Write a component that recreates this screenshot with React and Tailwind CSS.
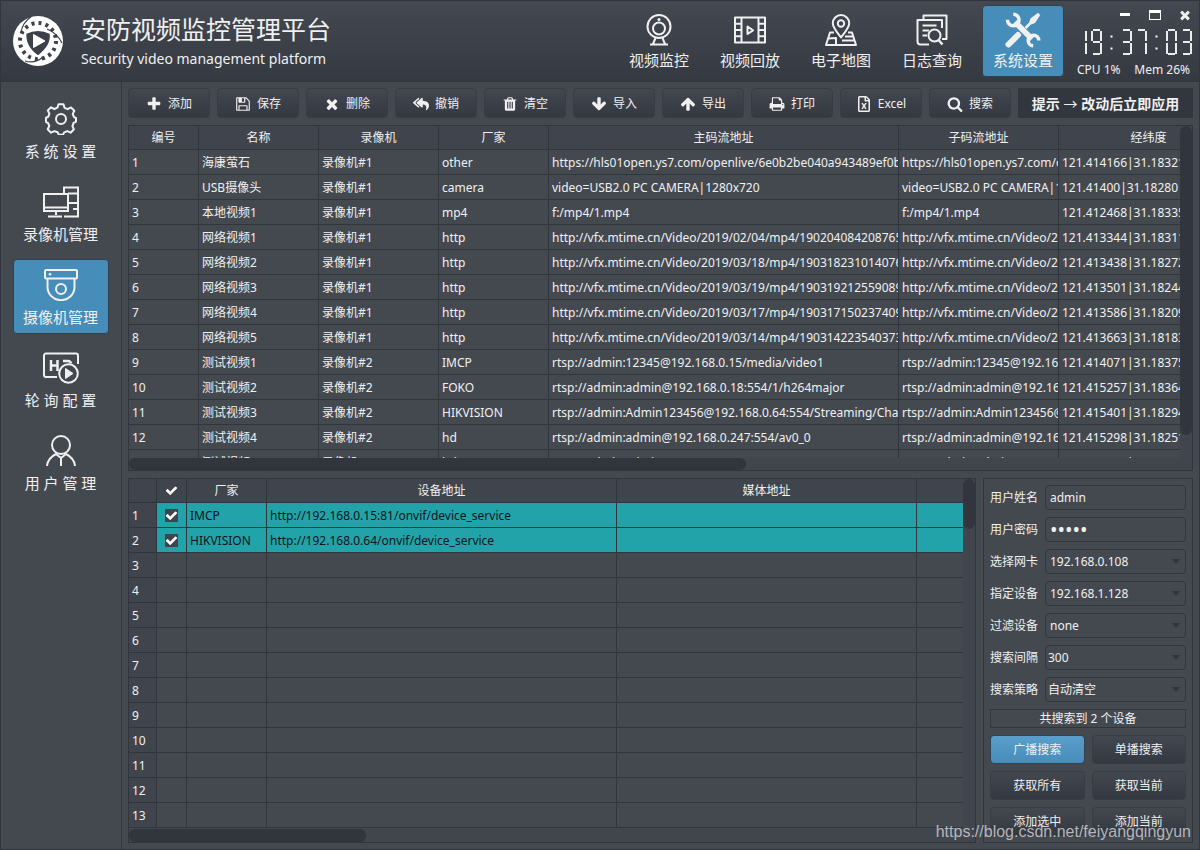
import React, { useState } from 'react';
import { FaRegFileExcel, FaReplyAll } from 'react-icons/fa';

const FA_PATHS = {
  plus: 'M1600 736v192q0 40-28 68t-68 28h-416v416q0 40-28 68t-68 28H800q-40 0-68-28t-28-68v-416H288q-40 0-68-28t-28-68V736q0-40 28-68t68-28h416V224q0-40 28-68t68-28h192q40 0 68 28t28 68v416h416q40 0 68 28t28 68z',
  save: 'M512 1536h768v-384H512v384zm896 0h128V640q0-14-10-38.5t-20-34.5l-281-281q-10-10-34-20t-39-10v416q0 40-28 68t-68 28H480q-40 0-68-28t-28-68V256H256v1280h128v-416q0-40 28-68t68-28h832q40 0 68 28t28 68v416zm-384-928V288q0-13-9.5-22.5T992 256H800q-13 0-22.5 9.5T768 288v320q0 13 9.5 22.5t22.5 9.5h192q13 0 22.5-9.5t9.5-22.5zm640 32v928q0 40-28 68t-68 28H224q-40 0-68-28t-28-68V224q0-40 28-68t68-28h928q40 0 88 20t76 48l280 280q28 28 48 76t20 88z',
  times: 'M1490 1322q0 40-28 68l-136 136q-28 28-68 28t-68-28l-294-294-294 294q-28 28-68 28t-68-28l-136-136q-28-28-28-68t28-68l294-294-294-294q-28-28-28-68t28-68l136-136q28-28 68-28t68 28l294 294 294-294q28-28 68-28t68 28l136 136q28 28 28 68t-28 68l-294 294 294 294q28 28 28 68z',
  check: 'M1671 566q0 40-28 68l-724 724-136 136q-28 28-68 28t-68-28l-136-136-362-362q-28-28-28-68t28-68l136-136q28-28 68-28t68 28l294 295 656-657q28-28 68-28t68 28l136 136q28 28 28 68z',
  search: 'M1216 832q0-185-131.5-316.5T768 384 451.5 515.5 320 832t131.5 316.5T768 1280t316.5-131.5T1216 832zm512 832q0 52-38 90t-90 38q-54 0-90-38l-343-342q-179 124-399 124-143 0-273.5-55.5t-225-150-150-225T64 832t55.5-273.5 150-225 225-150T768 128t273.5 55.5 225 150 150 225T1472 832q0 220-124 399l343 343q37 37 37 90z',
  up: 'M1675 971q0 51-37 90l-75 75q-38 38-91 38-54 0-90-38l-294-293v704q0 52-37.5 84.5T960 1664H832q-53 0-90.5-32.5T704 1547V843l-294 293q-36 38-90 38t-90-38l-75-75q-38-38-38-90 0-53 38-91l651-651q35-37 90-37 54 0 91 37l651 651q37 39 37 91z',
  print: 'M448 1536h896v-256H448v256zm0-640h896V512h-160q-40 0-68-28t-28-68V256H448v640zm1152 64q0-26-19-45t-45-19-45 19-19 45 19 45 45 19 45-19 19-45zm128 0v416q0 13-9.5 22.5t-22.5 9.5h-224v160q0 40-28 68t-68 28H416q-40 0-68-28t-28-68v-160H96q-13 0-22.5-9.5T64 1376V960q0-79 56.5-135.5T256 768h64V224q0-40 28-68t68-28h672q40 0 88 20t76 48l152 152q28 28 48 76t20 88v256h64q79 0 135.5 56.5T1728 960z',
  trash: 'M704 1376V672q0-14-9-23t-23-9h-64q-14 0-23 9t-9 23v704q0 14 9 23t23 9h64q14 0 23-9t9-23zm256 0V672q0-14-9-23t-23-9h-64q-14 0-23 9t-9 23v704q0 14 9 23t23 9h64q14 0 23-9t9-23zm256 0V672q0-14-9-23t-23-9h-64q-14 0-23 9t-9 23v704q0 14 9 23t23 9h64q14 0 23-9t9-23zM672 384h448l-48-117q-7-9-17-11H738q-10 2-17 11zm928 32v64q0 14-9 23t-23 9h-96v948q0 83-47 143.5t-113 60.5H480q-66 0-113-58.5T320 1464V512h-96q-14 0-23-9t-9-23v-64q0-14 9-23t23-9h309l70-167q15-37 54-63t79-26h320q40 0 79 26t54 63l70 167h309q14 0 23 9t9 23z',
};

const Fa = ({ name, className = 'w-4 h-4' }) => (
  <svg viewBox="0 0 1792 1792" fill="currentColor" className={className} aria-hidden="true">
    <path d={FA_PATHS[name]} />
  </svg>
);

const LineIcon = ({ children, className = 'w-8 h-8' }) => (
  <svg viewBox="0 0 32 32" fill="none" stroke="currentColor" strokeWidth="2" strokeLinejoin="round" className={className} aria-hidden="true">
    {children}
  </svg>
);

const CameraIcon = () => (
  <LineIcon>
    <circle cx="16" cy="12.500" r="11.500" />
    <circle cx="16" cy="14.500" r="6" />
    <circle cx="16" cy="5.500" r="1.500" fill="currentColor" stroke="none" />
    <path d="M12.500 24 10 30M19.500 24 22 30M7 30.500h18" />
  </LineIcon>
);

const FilmIcon = () => (
  <LineIcon>
    <path d="M1 3.500h30v25H1zM7.500 3.500v25M24.500 3.500v25M1 9.700h6.500M1 16h6.500M1 22.300h6.500M24.500 9.700H31M24.500 16H31M24.500 22.300H31" />
    <path d="M13.500 12.500v7.500l5.500-3.700z" />
  </LineIcon>
);

const MapIcon = () => (
  <LineIcon>
    <path d="M16 23.500C11 17 7.800 13.500 7.800 9.300a8.200 8.200 0 0 1 16.400 0c0 4.200-3.200 7.700-8.200 14.200z" />
    <circle cx="16" cy="9.500" r="3.200" />
    <path d="M9 18.500H5l-4 12.500h30l-4-12.500h-4M3.500 24.500l7.500-.5v7M17 26.500h12.500M20 22.500h7.500" />
  </LineIcon>
);

const LogIcon = () => (
  <LineIcon>
    <path d="M7.500 6V1.500h23V25h-4.500" />
    <path d="M13 30.500H4.500a3 3 0 0 1-3-3V6h24.500v8" />
    <path d="M6.500 11.500h14M6.500 16.500h6.500M6.500 21.500h4.500" />
    <circle cx="18.500" cy="21.500" r="6" />
    <path d="m22.500 26 4 4.500" strokeWidth="2.500" />
  </LineIcon>
);

const ToolsIcon = () => (
  <svg viewBox="0 0 36 36" className="w-9 h-9" fill="none" stroke="currentColor" aria-hidden="true">
    <path d="M3.500 32.500 13 23" strokeWidth="6" strokeLinecap="round" />
    <path d="M20.500 16 28 8.500" strokeWidth="2.500" />
    <path d="M25.500 6.500 33 .8l2.300 2.300L30 11l-3.500 1.500-2.300-2.300z" fill="currentColor" stroke="none" />
    <path d="M10 10 27 27" strokeWidth="5.500" />
    <path d="M2.500 7.800A5.800 5.800 0 1 0 8.300 2.200" strokeWidth="3.500" />
    <path d="M33.800 28.500a5.300 5.300 0 1 0-5.600 5.300" strokeWidth="3.500" />
  </svg>
);

const GearIcon = () => (
  <LineIcon>
    <circle cx="16" cy="16" r="5" />
    <path d="M13.500 1.300h5l1 3.500 3.200 1.400 3.300-1.800 3.300 3.400-1.600 3.300 1.300 3 2 .9v3.700l-2.400 1.200-1.200 3.200 1.500 3.200-3.300 3.400-3.300-1.600-3.100 1.300-1.200 2.300h-4.200l-1.200-2.400-3.200-1.200-3.400 1.600-3.300-3.400 1.600-3.300L3 19.900l-2-.9v-4.300l2.200-.8 1.200-3.200-1.600-3.300L6 4.300l3.300 1.700 3.100-1.300z" />
  </LineIcon>
);

const RecorderIcon = () => (
  <svg viewBox="0 0 36 32" fill="none" stroke="currentColor" strokeWidth="2" className="w-9 h-8" aria-hidden="true">
    <path d="M1 8h24v17H1zM1 21.500h24M13 25v4M5 30.500h14" />
    <path d="M21 8V1.500h14V30.500H21M25 7.500h10M25 17h10M30 23h5" />
  </svg>
);

const DomeIcon = () => (
  <svg viewBox="0 0 34 32" fill="none" stroke="currentColor" strokeWidth="2" className="w-[34px] h-8" aria-hidden="true">
    <rect x="1" y="1" width="32" height="8.500" rx="1" />
    <path d="M3.500 10v8a13.500 13.200 0 0 0 27 0v-8" />
    <circle cx="17" cy="20" r="5" />
    <circle cx="6" cy="5.300" r="1.300" fill="currentColor" stroke="none" />
  </svg>
);

const PollIcon = () => (
  <svg viewBox="0 0 36 32" fill="none" stroke="currentColor" strokeWidth="2" className="w-9 h-8" aria-hidden="true">
    <path d="M14 25H3a2 2 0 0 1-2-2V3.500a2 2 0 0 1 2-2h30a2 2 0 0 1 2 2V12" />
    <path d="M8 8v11M14.500 8v11M8 13.500h6.500M20 9h5q2.500 0 3 2.500" strokeWidth="2.500" />
    <circle cx="25.500" cy="21.500" r="9.300" />
    <path d="M22.500 16.500v10l7.500-5z" fill="currentColor" strokeWidth="1" />
  </svg>
);

const UserIcon = () => (
  <LineIcon>
    <circle cx="16" cy="10" r="9" />
    <path d="M2 31c.5-5.500 4-9.500 9-12l5 4 5-4c5 2.500 8.500 6.500 9 12M16 23v8" />
  </LineIcon>
);

const Logo = () => (
  <svg viewBox="0 0 50 50" className="w-[50px] h-[50px] shrink-0" aria-hidden="true">
    <circle cx="25" cy="25" r="25" fill="#fff" />
    <circle cx="25" cy="25" r="18" fill="none" stroke="#3c4048" strokeWidth="4" strokeDasharray="3 4.068" />
    <path d="M12.500 17q12.500-6 25 0 2.500 12-12.500 23.500Q11 31 12.500 17z" fill="#3c4048" strokeLinejoin="round" stroke="#fff" strokeWidth="2" />
    <path d="M8 16Q10 6 18 1M34 13q10 4 15 14M30 41q-8 7-18 4" fill="none" stroke="#3c4048" strokeWidth="1.200" />
    <path d="M20.500 18.500v13L32 25z" fill="#fff" stroke="#fff" strokeLinejoin="round" />
  </svg>
);

// Segments a-g, each [x1, y1, x2, y2] inside an 11x26 digit
const SEGMENTS = {
  a: [2, 1, 9, 1],
  b: [10, 2, 10, 12],
  c: [10, 14, 10, 25],
  d: [2, 25, 9, 25],
  e: [1, 14, 1, 25],
  f: [1, 2, 1, 12],
  g: [2, 13, 9, 13],
};
const DIGITS = {
  0: 'abcdef', 1: 'bc', 2: 'abged', 3: 'abgcd', 4: 'fgbc',
  5: 'afgcd', 6: 'afgedc', 7: 'abc', 8: 'abcdefg', 9: 'abcdfg',
};

const LcdClock = ({ value }) => (
  <svg width="117" height="27" viewBox="0 0 117 27" stroke="#fff" strokeWidth="1.800" role="img" aria-label={value}>
    {value.split('').map((ch, i) => (
      <g key={i} transform={`translate(${i * 15} 0)`}>
        {ch === ':' ? (
          <>
            <rect x="5" y="7" width="1" height="1" strokeWidth="1" />
            <rect x="5" y="19" width="1" height="1" strokeWidth="1" />
          </>
        ) : (
          DIGITS[ch].split('').map((s) => {
            const [x1, y1, x2, y2] = SEGMENTS[s];
            return <line key={s} x1={x1} y1={y1} x2={x2} y2={y2} />;
          })
        )}
      </g>
    ))}
  </svg>
);

const topNav = [
  { label: '视频监控', icon: CameraIcon },
  { label: '视频回放', icon: FilmIcon },
  { label: '电子地图', icon: MapIcon },
  { label: '日志查询', icon: LogIcon },
  { label: '系统设置', icon: ToolsIcon },
];

const sideNav = [
  { label: '系 统 设 置', icon: GearIcon },
  { label: '录像机管理', icon: RecorderIcon },
  { label: '摄像机管理', icon: DomeIcon },
  { label: '轮 询 配 置', icon: PollIcon },
  { label: '用 户 管 理', icon: UserIcon },
];

const tools = [
  { label: '添加', icon: <Fa name="plus" /> },
  { label: '保存', icon: <Fa name="save" /> },
  { label: '删除', icon: <Fa name="times" /> },
  { label: '撤销', icon: <FaReplyAll className="w-4 h-4" /> },
  { label: '清空', icon: <Fa name="trash" /> },
  { label: '导入', icon: <Fa name="up" className="w-4 h-4 rotate-180" /> },
  { label: '导出', icon: <Fa name="up" /> },
  { label: '打印', icon: <Fa name="print" /> },
  { label: 'Excel', icon: <FaRegFileExcel className="w-4 h-4" /> },
  { label: '搜索', icon: <Fa name="search" /> },
];

const cameraHeads = ['编号', '名称', '录像机', '厂家', '主码流地址', '子码流地址', '经纬度'];

const mtime = 'http://vfx.mtime.cn/Video/';
const cameras = [
  ['海康萤石', '录像机#1', 'other', 'https://hls01open.ys7.com/openlive/6e0b2be040a943489ef0b9bb344b96b8.hd.m3u8', '121.414166|31.183210'],
  ['USB摄像头', '录像机#1', 'camera', 'video=USB2.0 PC CAMERA|1280x720', '121.41400|31.18280'],
  ['本地视频1', '录像机#1', 'mp4', 'f:/mp4/1.mp4', '121.412468|31.183350'],
  ['网络视频1', '录像机#1', 'http', `${mtime}2019/02/04/mp4/190204084208765161.mp4`, '121.413344|31.183110'],
  ['网络视频2', '录像机#1', 'http', `${mtime}2019/03/18/mp4/190318231014076505.mp4`, '121.413438|31.182720'],
  ['网络视频3', '录像机#1', 'http', `${mtime}2019/03/19/mp4/190319212559089721.mp4`, '121.413501|31.182440'],
  ['网络视频4', '录像机#1', 'http', `${mtime}2019/03/17/mp4/190317150237409904.mp4`, '121.413586|31.182090'],
  ['网络视频5', '录像机#1', 'http', `${mtime}2019/03/14/mp4/190314223540373995.mp4`, '121.413663|31.181830'],
  ['测试视频1', '录像机#2', 'IMCP', 'rtsp://admin:12345@192.168.0.15/media/video1', '121.414071|31.183750'],
  ['测试视频2', '录像机#2', 'FOKO', 'rtsp://admin:admin@192.168.0.18:554/1/h264major', '121.415257|31.183640'],
  ['测试视频3', '录像机#2', 'HIKVISION', 'rtsp://admin:Admin123456@192.168.0.64:554/Streaming/Channels/101', '121.415401|31.182940'],
  ['测试视频4', '录像机#2', 'hd', 'rtsp://admin:admin@192.168.0.247:554/av0_0', '121.415298|31.182510'],
  ['测试视频5', '录像机#2', 'hd', 'rtsp://admin:admin@192.168.0.248:554/av0_0', '121.415298|31.182510'],
];

const devices = [
  { vendor: 'IMCP', address: 'http://192.168.0.15:81/onvif/device_service' },
  { vendor: 'HIKVISION', address: 'http://192.168.0.64/onvif/device_service' },
];

const fields = [
  { id: 'user', label: '用户姓名', type: 'text', value: 'admin' },
  { id: 'pwd', label: '用户密码', type: 'password', value: 'admin' },
  { id: 'card', label: '选择网卡', value: '192.168.0.108', editable: true },
  { id: 'device', label: '指定设备', value: '192.168.1.128', editable: true },
  { id: 'filter', label: '过滤设备', value: 'none', editable: true },
  { id: 'interval', label: '搜索间隔', value: '300' },
  { id: 'policy', label: '搜索策略', value: '自动清空' },
];

const actions = ['广播搜索', '单播搜索', '获取所有', '获取当前', '添加选中', '添加当前'];

const cell = 'h-[25px] p-0 pt-0.5 pl-[3px] border-r border-b border-[#31363e] overflow-hidden whitespace-nowrap text-left font-normal';
const head = 'h-6 p-0 border-r border-b border-[#31363e] bg-[#40444d] whitespace-nowrap text-center font-normal';
const button = 'rounded border border-[#383c45] bg-linear-to-b from-[#434750] to-[#343840]';

const Check = ({ checked, onChange, label, boxed }) => (
  <span className="relative block w-[13px] h-[13px] mx-auto">
    <input
      type="checkbox"
      aria-label={label}
      checked={checked}
      onChange={onChange}
      className={`block appearance-none w-[13px] h-[13px] ${boxed ? 'bg-[#40444d]' : ''}`}
    />
    {checked && <Fa name="check" className="absolute inset-0 w-[13px] h-[13px] text-white pointer-events-none" />}
  </span>
);

const NavButton = ({ item, active, onClick, className }) => {
  const Icon = item.icon;
  return (
    <button
      onClick={onClick}
      className={`flex flex-col items-center rounded text-[15px] leading-5 border whitespace-nowrap ${active ? 'bg-[#478db9] border-[#33414f]' : 'border-transparent'} ${className}`}
    >
      <span className="h-9 flex items-center"><Icon /></span>
      <span>{item.label}</span>
    </button>
  );
};

const CameraTable = () => (
  <div className="flex-1 min-h-0 flex flex-col border border-[#31363e]">
    <div className="flex-1 min-h-0 flex">
      <div className="flex-1 min-w-0 overflow-hidden">
        <table className="w-full min-w-[1110px] table-fixed border-separate border-spacing-0">
          <colgroup>
            <col className="w-[70px]" />
            <col className="w-[120px]" />
            <col className="w-[120px]" />
            <col className="w-[110px]" />
            <col className="w-[350px]" />
            <col className="w-[160px]" />
            <col />
          </colgroup>
          <thead>
            <tr>{cameraHeads.map(h => <th key={h} className={head}>{h}</th>)}</tr>
          </thead>
          <tbody>
            {cameras.map(([name, recorder, vendor, url, position], i) => (
              <tr key={name}>
                <td className={cell}>{i + 1}</td>
                <td className={cell}>{name}</td>
                <td className={cell}>{recorder}</td>
                <td className={cell}>{vendor}</td>
                <td className={cell}>{url}</td>
                <td className={cell}>{url}</td>
                <td className={cell}>{position}</td>
              </tr>
            ))}
          </tbody>
        </table>
      </div>
      <div className="w-3 bg-[#41454d]">
        <div className="h-[93%] rounded-md bg-[#32353e]" />
      </div>
    </div>
    <div className="h-3 bg-[#41454d]">
      <div className="h-full w-[58%] rounded-md bg-[#32353e]" />
    </div>
  </div>
);

const DeviceTable = () => {
  const [checked, setChecked] = useState([true, true]);
  const all = checked.every(Boolean);
  const rows = Array.from({ length: 13 }, (_, i) => devices[i]);

  return (
    <div className="flex-1 min-w-0 flex flex-col border border-[#31363e]">
      <div className="flex-1 flex">
        <div className="flex-1 min-w-0 overflow-hidden">
          <table className="w-full min-w-[888px] table-fixed border-separate border-spacing-0">
            <colgroup>
              <col className="w-7" />
              <col className="w-[30px]" />
              <col className="w-20" />
              <col className="w-[350px]" />
              <col className="w-[300px]" />
              <col />
            </colgroup>
            <thead>
              <tr>
                <th className={head} />
                <th className={head}>
                  <Check label="全选" checked={all} onChange={() => setChecked([!all, !all])} />
                </th>
                <th className={head}>厂家</th>
                <th className={head}>设备地址</th>
                <th className={head}>媒体地址</th>
                <th className={head} />
              </tr>
            </thead>
            <tbody>
              {rows.map((device, i) => (
                <tr key={i} className={device ? 'bg-[#22a3a9] text-[#101418]' : ''}>
                  <th className={`${cell} bg-[#40444d] text-[#f0f0f0]`}>{i + 1}</th>
                  <td className="h-[25px] p-0 border-r border-b border-[#31363e]">
                    {device && (
                      <Check
                        boxed
                        label={device.vendor}
                        checked={checked[i]}
                        onChange={() => setChecked(checked.map((c, n) => (n === i ? !c : c)))}
                      />
                    )}
                  </td>
                  <td className={cell}>{device?.vendor}</td>
                  <td className={cell}>{device?.address}</td>
                  <td className={cell} />
                  <td className={cell} />
                </tr>
              ))}
            </tbody>
          </table>
        </div>
        <div className="w-3 bg-[#41454d]">
          <div className="h-[50px] rounded-md bg-[#32353e]" />
        </div>
      </div>
      <div className="h-[13px] bg-[#41454d]">
        <div className="h-full w-[28%] rounded-md bg-[#32353e]" />
      </div>
    </div>
  );
};

const SearchPanel = () => (
  <form className="w-[210px] shrink-0 border border-[#31363e] p-1.5 flex flex-col gap-[7px]" onSubmit={e => e.preventDefault()}>
    {fields.map(f => (
      <div key={f.id} className="flex items-center gap-[7px]">
        <label htmlFor={f.id} className="w-12 shrink-0 whitespace-nowrap">{f.label}</label>
        {f.type ? (
          <input
            id={f.id}
            type={f.type}
            defaultValue={f.value}
            className={`flex-1 min-w-0 h-[25px] px-1 rounded-sm border border-[#31363e] outline-none ${f.type === 'password' ? 'text-xl' : ''}`}
          />
        ) : (
          <div className="relative flex-1 min-w-0">
            <select
              id={f.id}
              defaultValue={f.value}
              className={`block w-full h-[25px] appearance-none rounded-sm border border-[#31363e] bg-[#444950] outline-none ${f.editable ? 'pl-1' : 'pl-0.5'}`}
            >
              <option>{f.value}</option>
            </select>
            <svg viewBox="0 0 8 5" className="absolute right-1.5 top-2.5 w-2 h-[5px] pointer-events-none" fill="#31363e" aria-hidden="true">
              <path d="M0 0h8L4 5z" />
            </svg>
          </div>
        )}
      </div>
    ))}
    <div className="h-[19px] leading-[17px] border border-[#31363e] text-center">共搜索到 2 个设备</div>
    <div className="grid grid-cols-2 gap-[7px]">
      {actions.map((a, i) => (
        <button
          key={a}
          type="button"
          className={`h-[29px] ${i === 0 ? 'rounded border border-[#33414f] bg-linear-to-b from-[#5a9fcb] to-[#478db9]' : button}`}
        >
          {a}
        </button>
      ))}
    </div>
  </form>
);

const App = () => {
  const [page, setPage] = useState(4);
  const [section, setSection] = useState(2);

  return (
    <div className="relative h-screen flex flex-col overflow-hidden bg-[#444950] border border-[#31363e] text-[#f0f0f0] text-xs font-['Noto_Sans','Noto_Sans_CJK_SC',sans-serif]">
      <header className="h-[81px] shrink-0 flex items-center pl-3 pr-1.5 border-b border-[#31363e] bg-linear-to-b from-[#444850] to-[#353941]">
        <Logo />
        <div className="ml-[18px] pt-1 whitespace-nowrap">
          <h1 className="text-[25px] leading-8">安防视频监控管理平台</h1>
          <p className="text-sm leading-7">Security video management platform</p>
        </div>
        <nav className="ml-auto flex gap-[9px]">
          {topNav.map((item, i) => (
            <NavButton key={item.label} item={item} active={page === i} onClick={() => setPage(i)} className="w-[82px] h-[72px] pt-1.5 gap-0.5" />
          ))}
        </nav>
        <div className="ml-3 w-[117px] pt-1 flex flex-col items-end">
          <div className="flex gap-3.5 h-4 items-center">
            <button aria-label="最小化" className="w-4 h-4 flex items-center justify-center">
              <span className="w-2.5 h-[3px] bg-white" />
            </button>
            <button aria-label="最大化" className="w-4 h-4 flex items-center justify-center">
              <span className="w-3 h-2.5 border border-t-3 border-white" />
            </button>
            <button aria-label="关闭" className="w-4 h-4 flex items-center justify-center">
              <Fa name="times" className="w-3.5 h-3.5" />
            </button>
          </div>
          <div className="mt-1.5"><LcdClock value="19:37:03" /></div>
          <div className="mt-1 w-full flex justify-between pl-px pr-[3px] leading-5 whitespace-nowrap">
            <span>CPU 1%</span>
            <span>Mem 26%</span>
          </div>
        </div>
      </header>

      <div className="flex-1 min-h-0 flex">
        <aside className="w-[121px] shrink-0 flex flex-col items-center gap-2 pt-[11px] pr-px border-r border-[#31363e]">
          {sideNav.map((item, i) => (
            <NavButton key={item.label} item={item} active={section === i} onClick={() => setSection(i)} className="w-24 h-[75px] pt-[7px] gap-1" />
          ))}
        </aside>

        <main className="flex-1 min-w-0 flex flex-col gap-[7px] p-1.5">
          <div className="flex gap-[7px]">
            {tools.map(t => (
              <button key={t.label} className={`w-[82px] h-[30px] pt-0.5 shrink-0 flex items-center justify-center gap-1.5 ${button}`}>
                {t.icon}
                {t.label}
              </button>
            ))}
            <div className="flex-1 pt-0.5 bg-[#32363e] flex items-center justify-center text-sm leading-5 font-bold whitespace-nowrap">
              <p>提示 <span className="font-normal">→</span> 改动后立即应用</p>
            </div>
          </div>
          <CameraTable />
          <div className="flex gap-[7px]">
            <DeviceTable />
            <SearchPanel />
          </div>
        </main>
      </div>

      <a
        href="https://blog.csdn.net/feiyangqingyun"
        className="absolute right-2 bottom-[5px] text-base leading-6 text-[#c4c6c9]/90 font-['Liberation_Sans',sans-serif]"
      >
        https://blog.csdn.net/feiyangqingyun
      </a>
    </div>
  );
};

export default App;
